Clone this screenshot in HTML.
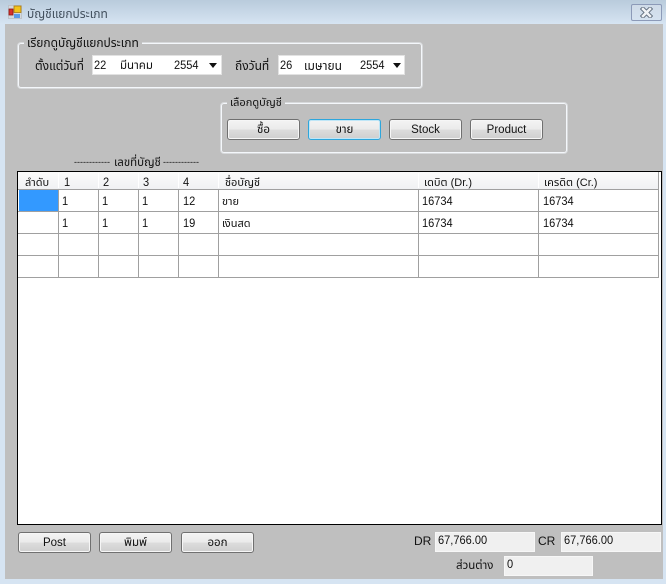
<!DOCTYPE html>
<html lang="th"><head><meta charset="utf-8"><title>บัญชีแยกประเภท</title>
<style>
html,body{margin:0;padding:0;background:#d6e4f2}
body{width:666px;height:584px;position:relative;overflow:hidden;font-family:"Liberation Sans","Noto Sans Thai","Noto Sans CJK SC",sans-serif;font-size:12px;color:#111}
div,span{position:absolute;box-sizing:border-box;white-space:nowrap}
.t{line-height:16px;height:16px}
.n{transform:scaleX(.92);transform-origin:left center}
.g{border:1px solid rgba(245,248,252,.45);border-radius:4px;box-shadow:inset 0 0 0 1px #f4f7fb}
.lg{background:#bfbfbf;padding:0 3px;line-height:14px;height:14px;font-size:11px}
.sel{background:#fff;border:1px solid #e2e2e2;height:20px;top:55px}
.arr{width:0;height:0;border-left:4.5px solid transparent;border-right:4.5px solid transparent;border-top:5px solid #111}
.b{height:21px;border:1px solid #707070;border-radius:3px;background:linear-gradient(#f3f3f3 0,#ebebeb 48%,#dcdcdc 52%,#cfcfcf 100%);text-align:center;line-height:20px;font-size:11.5px;box-shadow:inset 0 0 0 1px #f6f6f6}
.f{background:#f0f0f0;border:1px solid #f7f7f7;height:20px}
.h{background:#a0a0a0}
.hc{top:174px;height:16px;line-height:16px;font-size:12px}
.hh{top:175px;height:16px;line-height:16px;font-size:11px}
.c{height:16px;line-height:16px}
</style></head><body>
<div style="left:0;top:0;width:666px;height:24px;background:linear-gradient(#b9cbdc,#d6e4f2)"></div>
<svg style="position:absolute;left:8px;top:5px" width="14" height="14" viewBox="0 0 14 14"><rect x="0" y="0" width="14" height="14" fill="#bcc3ca"/><rect x="1" y="1" width="12" height="12" fill="#d3d8de"/><rect x="6" y="1" width="7" height="6.5" fill="#f2c21a" stroke="#a8780e" stroke-width=".8"/><rect x="1" y="4" width="4" height="6" fill="#d8302a" stroke="#8a1a18" stroke-width=".8"/><rect x="6" y="9" width="6" height="4" fill="#5b9be8"/></svg>
<div class="t" style="left:27px;top:6px;color:#43505e;font-size:12px">บัญชีแยกประเภท</div>
<div style="left:631px;top:4px;width:31px;height:17px;border:1px solid #8c9ab8;border-radius:2px;background:linear-gradient(#cfdbe8,#d5e2f0)"></div>
<svg style="position:absolute;left:640px;top:7px" width="13" height="11" viewBox="0 0 13 11"><path d="M3 2L10 9M10 2L3 9" stroke="#5d6a7a" stroke-width="4.4" stroke-linecap="square"/><path d="M3 2L10 9M10 2L3 9" stroke="#f0f3f6" stroke-width="2.6" stroke-linecap="square"/></svg>

<div style="left:5px;top:24px;width:658px;height:555px;background:#bfbfbf"></div>

<div class="g" style="left:17px;top:42px;width:406px;height:47px"></div>
<div class="lg" style="left:24px;top:36px;font-size:12px">เรียกดูบัญชีแยกประเภท</div>
<div class="t" style="left:35px;top:58px">ตั้งแต่วันที่</div>
<div class="sel" style="left:92px;width:130px"></div>
<div class="t n" style="left:94px;top:57px">22</div>
<div class="t" style="left:120px;top:58px;font-size:11.5px">มีนาคม</div>
<div class="t n" style="left:174px;top:57px">2554</div>
<div class="arr" style="left:209px;top:63px"></div>
<div class="t" style="left:235px;top:58px">ถึงวันที่</div>
<div class="sel" style="left:278px;width:127px"></div>
<div class="t n" style="left:280px;top:57px">26</div>
<div class="t" style="left:304px;top:58px">เมษายน</div>
<div class="t n" style="left:360px;top:57px">2554</div>
<div class="arr" style="left:393px;top:63px"></div>

<div class="g" style="left:220px;top:102px;width:348px;height:52px"></div>
<div class="lg" style="left:227px;top:96px">เลือกดูบัญชี</div>
<div class="b" style="left:227px;top:119px;width:73px">ซื้อ</div>
<div class="b" style="left:308px;top:119px;width:73px;border-color:#2ea6dc;box-shadow:inset 0 0 0 1px #bfe6f7">ขาย</div>
<div class="b" style="left:389px;top:119px;width:73px">Stock</div>
<div class="b" style="left:470px;top:119px;width:73px">Product</div>

<div class="t" style="left:74px;top:154px;font-size:9px">------------</div>
<div class="t" style="left:114px;top:155px;font-size:11.5px">เลขที่บัญชี</div>
<div class="t" style="left:163px;top:154px;font-size:9px">------------</div>

<div style="left:17px;top:171px;width:645px;height:354px;background:#fff;border:1px solid #000"></div>
<div style="left:18px;top:172px;width:640px;height:17px;background:linear-gradient(#fbfbfb,#f0f1f3)"></div>
<div class="h" style="left:18px;top:189px;width:641px;height:1px"></div>
<div class="h" style="left:18px;top:211px;width:641px;height:1px"></div>
<div class="h" style="left:18px;top:233px;width:641px;height:1px"></div>
<div class="h" style="left:18px;top:255px;width:641px;height:1px"></div>
<div class="h" style="left:18px;top:277px;width:641px;height:1px"></div>
<div class="h" style="left:58px;top:190px;width:1px;height:88px"></div>
<div class="h" style="left:98px;top:190px;width:1px;height:88px"></div>
<div class="h" style="left:138px;top:190px;width:1px;height:88px"></div>
<div class="h" style="left:178px;top:190px;width:1px;height:88px"></div>
<div class="h" style="left:218px;top:190px;width:1px;height:88px"></div>
<div class="h" style="left:418px;top:190px;width:1px;height:88px"></div>
<div class="h" style="left:538px;top:190px;width:1px;height:88px"></div>
<div class="h" style="left:658px;top:172px;width:1px;height:106px"></div>
<div style="left:58px;top:173px;width:1px;height:15px;background:#fff"></div>
<div style="left:98px;top:173px;width:1px;height:15px;background:#fff"></div>
<div style="left:138px;top:173px;width:1px;height:15px;background:#fff"></div>
<div style="left:178px;top:173px;width:1px;height:15px;background:#fff"></div>
<div style="left:218px;top:173px;width:1px;height:15px;background:#fff"></div>
<div style="left:418px;top:173px;width:1px;height:15px;background:#fff"></div>
<div style="left:538px;top:173px;width:1px;height:15px;background:#fff"></div>
<div style="left:19px;top:190px;width:39px;height:21px;background:#3399ff"></div>

<div class="hh" style="left:25px">ลำดับ</div>
<div class="hc n" style="left:64px">1</div>
<div class="hc n" style="left:103px">2</div>
<div class="hc n" style="left:143px">3</div>
<div class="hc n" style="left:183px">4</div>
<div class="hh" style="left:225px">ชื่อบัญชี</div>
<div class="hh" style="left:424px">เดบิต (Dr.)</div>
<div class="hh" style="left:544px">เครดิต (Cr.)</div>

<div class="c n" style="left:62px;top:193px">1</div>
<div class="c n" style="left:102px;top:193px">1</div>
<div class="c n" style="left:142px;top:193px">1</div>
<div class="c n" style="left:183px;top:193px">12</div>
<div class="c" style="left:222px;top:194px;font-size:11px">ขาย</div>
<div class="c n" style="left:422px;top:193px">16734</div>
<div class="c n" style="left:543px;top:193px">16734</div>
<div class="c n" style="left:62px;top:215px">1</div>
<div class="c n" style="left:102px;top:215px">1</div>
<div class="c n" style="left:142px;top:215px">1</div>
<div class="c n" style="left:183px;top:215px">19</div>
<div class="c" style="left:222px;top:216px;font-size:11px">เงินสด</div>
<div class="c n" style="left:422px;top:215px">16734</div>
<div class="c n" style="left:543px;top:215px">16734</div>

<div class="b" style="left:18px;top:532px;width:73px">Post</div>
<div class="b" style="left:99px;top:532px;width:73px">พิมพ์</div>
<div class="b" style="left:181px;top:532px;width:73px">ออก</div>

<div class="t" style="left:414px;top:533px">DR</div>
<div class="f" style="left:435px;top:532px;width:100px"></div>
<div class="t n" style="left:438px;top:532px">67,766.00</div>
<div class="t" style="left:538px;top:533px">CR</div>
<div class="f" style="left:561px;top:532px;width:100px"></div>
<div class="t n" style="left:564px;top:532px">67,766.00</div>
<div class="t" style="left:456px;top:558px;font-size:11.5px">ส่วนต่าง</div>
<div class="f" style="left:504px;top:556px;width:89px"></div>
<div class="t n" style="left:507px;top:556px">0</div>
</body></html>
